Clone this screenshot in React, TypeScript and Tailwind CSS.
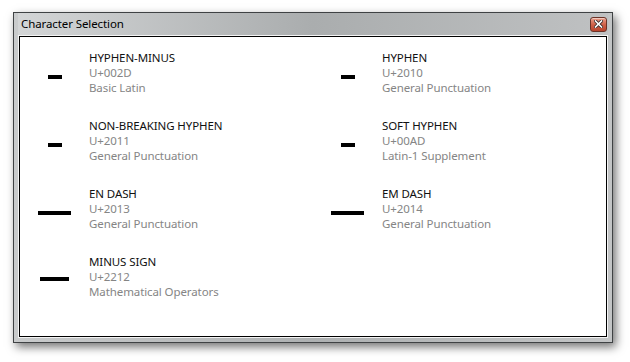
import React from "react";

type Entry = {
  char: string;
  name: string;
  code: string;
  block: string;
  bar: string; // width class for the glyph preview
  top: string; // vertical offset inside the glyph cell
};

const entries: Entry[] = [
  { char: "-", name: "HYPHEN-MINUS", code: "U+002D", block: "Basic Latin", bar: "w-[14px]", top: "pt-[25px]" },
  { char: "\u2010", name: "HYPHEN", code: "U+2010", block: "General Punctuation", bar: "w-[14px]", top: "pt-[25px]" },
  { char: "\u2011", name: "NON-BREAKING HYPHEN", code: "U+2011", block: "General Punctuation", bar: "w-[14px]", top: "pt-[25px]" },
  { char: "\u00AD", name: "SOFT HYPHEN", code: "U+00AD", block: "Latin-1 Supplement", bar: "w-[14px]", top: "pt-[25px]" },
  { char: "\u2013", name: "EN DASH", code: "U+2013", block: "General Punctuation", bar: "w-[33px]", top: "pt-[25px]" },
  { char: "\u2014", name: "EM DASH", code: "U+2014", block: "General Punctuation", bar: "w-[33px]", top: "pt-[25px]" },
  { char: "\u2212", name: "MINUS SIGN", code: "U+2212", block: "Mathematical Operators", bar: "w-[29px]", top: "pt-[23px]" },
];

function CloseButton() {
  return (
    <div className="w-[17px] h-[15px] rounded-[3px] border border-[#6b3328] bg-gradient-to-b from-[#e9a08c] via-[#d0624a] to-[#b8432c] flex items-center justify-center shadow-[inset_0_1px_0_rgba(255,255,255,0.45)]">
      <svg width="9" height="8" viewBox="0 0 9 8">
        <path d="M1.5 1 L7.5 7 M7.5 1 L1.5 7" stroke="#3a2a2a" strokeWidth="3.2" strokeLinecap="square" />
        <path d="M1.5 1 L7.5 7 M7.5 1 L1.5 7" stroke="#ffffff" strokeWidth="1.6" strokeLinecap="square" />
      </svg>
    </div>
  );
}

function CharCell({ e }: { e: Entry }) {
  return (
    <div className="flex h-[45px]">
      <div className={`w-[69px] shrink-0 flex justify-center ${e.top}`} title={e.char}>
        <div className={`${e.bar} h-[4px] bg-black`} />
      </div>
      <div className="text-[11.5px] leading-[15px] tracking-[-0.1px]">
        <div className="text-[#111]">{e.name}</div>
        <div className="text-[#858585]">{e.code}</div>
        <div className="text-[#858585]">{e.block}</div>
      </div>
    </div>
  );
}

export default function App() {
  return (
    <div className="w-[630px] h-[362px] bg-white pt-[12px] pl-[13px] font-['Segoe_UI','Noto_Sans',sans-serif]">
      <div className="w-[600px] h-[331px] flex flex-col border border-[#3f4244] bg-gradient-to-r from-[#c9cbcc] via-[#aeb1b2] to-[#c3c5c6] px-[4px] pb-[4px] shadow-[3px_4px_9px_rgba(0,0,0,0.55)]">
        <div className="h-[22px] shrink-0 flex items-center justify-between pl-[3px] pr-[1px] bg-gradient-to-r from-[#d3d5d6] via-[#aaadae] to-[#bfc1c2]">
          <span className="text-[11.5px] tracking-[-0.1px] text-black leading-none -mt-[1px]">Character Selection</span>
          <CloseButton />
        </div>
        <div className="flex-1 border border-[#f4f4f4]">
          <div className="h-full border border-black bg-white">
            <div className="grid grid-cols-2 gap-y-[23px] pt-[13px]">
              {entries.map((e) => (
                <CharCell key={e.code} e={e} />
              ))}
            </div>
          </div>
        </div>
      </div>
    </div>
  );
}
